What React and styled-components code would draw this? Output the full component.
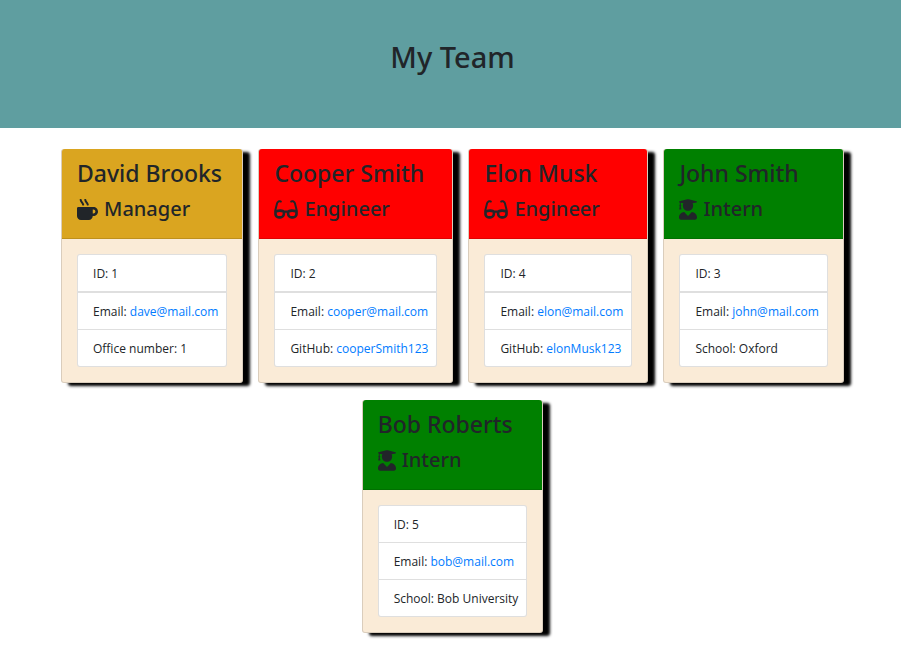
import React from "react";
import styled, { createGlobalStyle } from "styled-components";
import { FaMugHot, FaGlasses, FaUserGraduate } from "react-icons/fa";

const GlobalStyle = createGlobalStyle`
  *, *::before, *::after { box-sizing: border-box; }
  body {
    margin: 0;
    background: #fff;
    color: #212529;
    font-family: "Open Sans", "Noto Sans", sans-serif;
    font-size: 12px;
    line-height: 18px;
  }
`;

const Banner = styled.header`
  padding: 39px 24px 53px 28px;
  background: cadetblue;
  text-align: center;
`;

const BannerTitle = styled.h1`
  margin: 0;
  font-family: "Noto Sans", sans-serif;
  font-size: 29px;
  font-weight: 500;
  line-height: 36px;
`;

const Team = styled.main`
  display: flex;
  flex-wrap: wrap;
  justify-content: center;
  gap: 17px 15px;
  padding: 21px 36px 28px 40px;
`;

const Card = styled.article`
  min-width: 180px;
  border: 1px solid rgba(0, 0, 0, 0.125);
  border-radius: 3px;
  background: antiquewhite;
  box-shadow: 7px 3px 3px #000;
`;

const CardHeader = styled.header`
  margin-top: -1px;
  padding: 9px 15px 14px;
  border-bottom: 1px solid rgba(0, 0, 0, 0.125);
  border-radius: 3px 3px 0 0;
  background: ${({ $color }) => $color};
  font-family: "Noto Sans", sans-serif;
`;

const Name = styled.h2`
  margin: 0 0 6px;
  font-size: 23px;
  font-weight: 500;
  line-height: 30px;
`;

const Role = styled.h3`
  display: flex;
  align-items: center;
  gap: 6px;
  margin: 0;
  font-size: 20px;
  font-weight: 500;
  line-height: 30px;
`;

const RoleIcon = styled.svg`
  flex: none;
  width: ${({ $width }) => $width}px;
  height: 21px;
`;

const Details = styled.ul`
  margin: 15px;
  padding: 0;
  list-style: none;
  border: 1px solid rgba(0, 0, 0, 0.125);
  border-radius: 3px;
  background: #fff;
`;

const Detail = styled.li`
  padding: 10px 8px 8px 15px;
  border-top: ${({ $divider = 0 }) => $divider}px solid rgba(0, 0, 0, 0.125);
`;

const Link = styled.a`
  color: #007bff;
  text-decoration: none;

  &:hover { text-decoration: underline; }
`;

const roles = {
  Manager: { color: "goldenrod", Icon: FaMugHot, iconWidth: 21 },
  Engineer: { color: "red", Icon: FaGlasses, iconWidth: 24 },
  Intern: { color: "green", Icon: FaUserGraduate, iconWidth: 18 },
};

const members = [
  { id: 1, name: "David Brooks", role: "Manager", email: "dave@mail.com", label: "Office number", value: "1" },
  { id: 2, name: "Cooper Smith", role: "Engineer", email: "cooper@mail.com", label: "GitHub", value: "cooperSmith123" },
  { id: 4, name: "Elon Musk", role: "Engineer", email: "elon@mail.com", label: "GitHub", value: "elonMusk123" },
  { id: 3, name: "John Smith", role: "Intern", email: "john@mail.com", label: "School", value: "Oxford" },
  { id: 5, name: "Bob Roberts", role: "Intern", email: "bob@mail.com", label: "School", value: "Bob University", divider: 1 },
];

function MemberCard({ member }) {
  const { color, Icon, iconWidth } = roles[member.role];
  return (
    <Card>
      <CardHeader $color={color}>
        <Name>{member.name}</Name>
        <Role>
          <RoleIcon as={Icon} $width={iconWidth} aria-hidden="true" />
          {member.role}
        </Role>
      </CardHeader>
      <Details>
        <Detail>ID: {member.id}</Detail>
        <Detail $divider={member.divider ?? 2}>
          Email: <Link href={`mailto:${member.email}`}>{member.email}</Link>
        </Detail>
        <Detail $divider={1}>
          {member.label}:{" "}
          {member.label === "GitHub" ? (
            <Link href={`https://github.com/${member.value}`}>{member.value}</Link>
          ) : (
            member.value
          )}
        </Detail>
      </Details>
    </Card>
  );
}

export default function App() {
  return (
    <>
      <GlobalStyle />
      <Banner>
        <BannerTitle>My Team</BannerTitle>
      </Banner>
      <Team>
        {members.map((member) => (
          <MemberCard key={member.id} member={member} />
        ))}
      </Team>
    </>
  );
}
